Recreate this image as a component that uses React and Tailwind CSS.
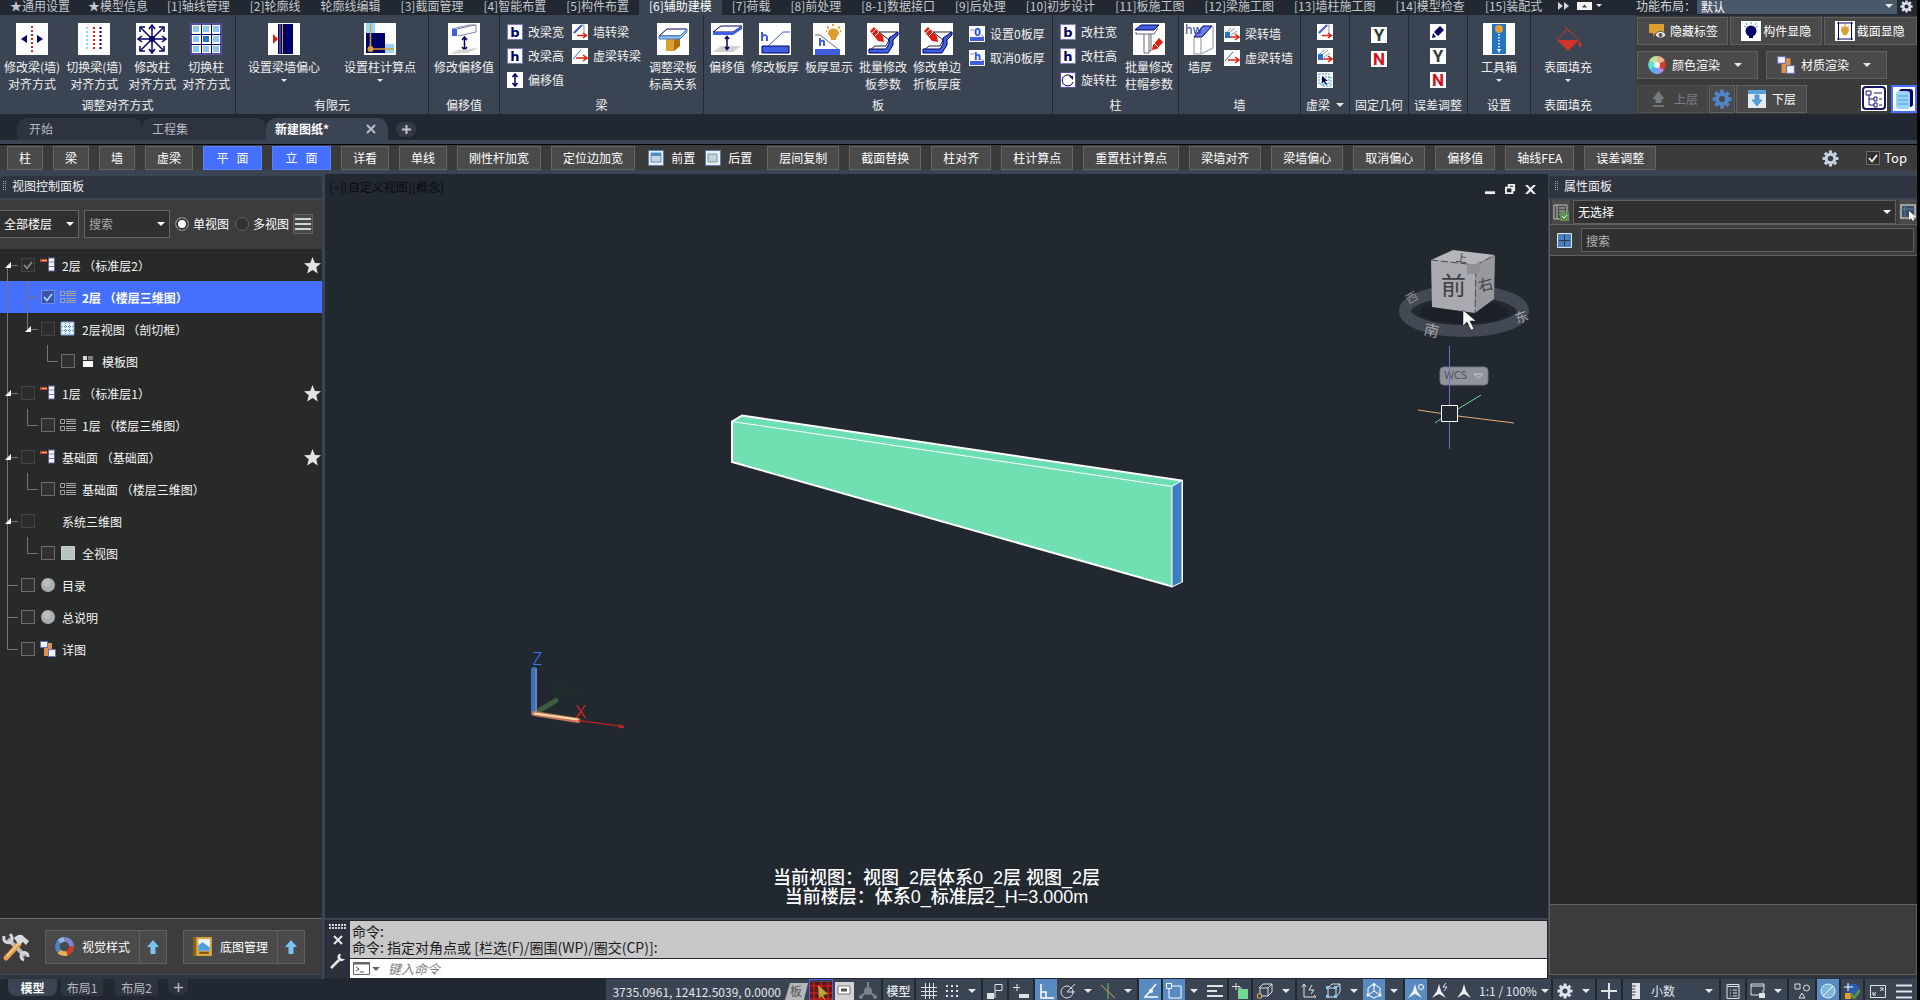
import React from 'react';

/* ---------- drawing helpers ---------- */
const Svg = ({ s = 16, w, h, vb = '0 0 16 16', className = '', children }) => (
  <svg width={w || s} height={h || s} viewBox={vb} className={'shrink-0 ' + className} fill="none" aria-hidden="true">
    {children}
  </svg>
);
const Big = ({ children, plain }) => (
  <Svg s={32} vb="0 0 32 32" className={plain ? '' : 'bg-white'}>{children}</Svg>
);
const Small = ({ children }) => <Svg className="bg-white">{children}</Svg>;
const Caret = ({ className = '', w = 8, c = '#e6e6e6' }) => (
  <Svg w={w} h={w / 2} vb="0 0 8 4" className={className}><path d="M0 0h8L4 4z" fill={c} /></Svg>
);

const NAVY = '#000066';
const BLUE = '#3f5fe0';

/* ---------- ribbon icons ---------- */
const AlignBeam = () => (
  <Big>
    <path d="M16 3v26" stroke="#e02010" strokeWidth="2" strokeDasharray="2 2" />
    <path d="M11 12v8l-6-4zM21 12v8l6-4z" fill={NAVY} />
  </Big>
);
const SwitchBeam = () => (
  <Big>
    <path d="M9 4v24" stroke="#9ad0f5" strokeWidth="2" strokeDasharray="2 2" />
    <path d="M16 4v24" stroke="#e02010" strokeWidth="2" strokeDasharray="2 2" />
    <path d="M22.500 4v24" stroke={NAVY} strokeWidth="2" strokeDasharray="2 2" />
  </Big>
);
const AlignCol = () => (
  <Big>
    <path d="M16 3v26M3 16h26M5 5l22 22M27 5L5 27" stroke={NAVY} strokeWidth="1.500" />
    <path d="M13 6l3-4 3 4M13 26l3 4 3-4M6 13l-4 3 4 3M26 13l4 3-4 3M4 9V4h5M23 4h5v5M4 23v5h5M23 28h5v-5" stroke={NAVY} strokeWidth="1.500" />
    <circle cx="16" cy="16" r="3" fill={NAVY} />
  </Big>
);
const SwitchCol = () => (
  <Big>
    <rect x="1" y="1" width="30" height="30" stroke="#5a4da8" strokeWidth="2" />
    <path d="M11.500 1v30M21.500 1v30M1 11.500h30M1 21.500h30" stroke={NAVY} />
    {[3, 13, 23].map((x) => [3, 13, 23].map((y) => (
      <rect key={x + '-' + y} x={x} y={y} width="6" height="6" fill={x === 13 && y === 13 ? '#2673c4' : '#8cc4f5'} />
    )))}
  </Big>
);
const WallOffset = () => (
  <Big>
    <path d="M10 1h15v30H10z" fill={NAVY} />
    <path d="M14.500 1v30" stroke="#dba030" />
    <path d="M12 1v30" stroke="#8d8a9c" />
    <path d="M5 11v10l5-5z" fill="#e02010" />
  </Big>
);
const CalcPoint = () => (
  <Big>
    <path d="M2 0h9v11H2zM20 21h10v9H20z" fill="#9ad4fa" />
    <path d="M2 10h19v20H2z" fill={NAVY} />
    <path d="M6.500 1v25H30" stroke="#dba030" strokeWidth="1.500" />
    <circle cx="6.500" cy="26" r="3" fill="#dba030" />
  </Big>
);
const ModifyOffset = () => (
  <Big>
    <path d="M4 6h5v7H4z" fill={BLUE} />
    <path d="M4 6l17-4h7v7l-18 4M9 6l18-4" stroke="#7882a8" />
    <path d="M16.500 14v13M14 17l2.500-3 2.500 3M14 24l2.500 3 2.500-3" stroke={NAVY} strokeWidth="1.500" />
    <path d="M2 31l8-4 20-2-10 5z" fill="#d5d5d5" />
  </Big>
);
const LetterIcon = ({ c }) => (
  <span className="flex size-4 shrink-0 items-center justify-center border border-[#8079b8] bg-white font-['DejaVu_Sans',sans-serif] text-[13px] font-bold leading-none text-[#000066]">{c}</span>
);
const PlainLetter = ({ c, red }) => (
  <span className={(red ? 'text-[#d0101a]' : 'text-[#2f3f37]') + " flex size-4 shrink-0 items-center justify-center bg-white font-['Roboto',sans-serif] text-[17px] font-bold leading-none"}>{c}</span>
);
const UpDown = () => (
  <Small><path d="M8 2v12M5.500 5L8 2l2.500 3M5.500 11L8 14l2.500-3" stroke={NAVY} strokeWidth="1.500" /></Small>
);
const WallToBeam = () => (
  <Small>
    <path d="M1 9l7-7 4-1v8" stroke="#8d93a8" /><path d="M2 9l8-8" stroke={BLUE} strokeWidth="2" />
    <path d="M5 11.500h9M11 9l3.500 2.500L11 14" stroke="#e02010" strokeWidth="1.500" />
  </Small>
);
const VirtToBeam = () => (
  <Small>
    <path d="M1 11L9 2" stroke="#2673c4" /><path d="M4 10h10M11 7l4 3-4 3" stroke="#e02010" strokeWidth="1.500" />
  </Small>
);
const BeamToWall = () => (
  <Small>
    <path d="M1 6h5v6H1z" fill="#2673c4" /><path d="M3 6l4-4M6 6l5-4M7 9l6-4" stroke="#8d93a8" />
    <path d="M6 11h8M11 8l4 3-4 3" stroke="#e02010" strokeWidth="1.500" />
  </Small>
);
const BeamSlab = () => (
  <Big>
    <path d="M9 15h14v8l-6 5H9z" fill="#dba030" /><path d="M17 17l6-2v8l-6 5z" fill="#a87012" />
    <path d="M2 13L10 6h20l-7 7z" fill="#fff" stroke={NAVY} /><path d="M2 13h21l7-7v3l-7 7H2z" fill="#8cc4f5" stroke="#5577c0" />
  </Big>
);
const SlabOffset = () => (
  <Big>
    <path d="M2 9l8-6h21l-9 6z" fill="#fff" stroke={NAVY} /><path d="M2 9h20l9-6v3l-9 6H2z" fill={BLUE} />
    <path d="M2 29l8-6h20l-8 6z" fill="#d0d0d0" />
    <path d="M16 14v12M14 16l2-2.500 2 2.500M14 24l2 2.500 2-2.500" stroke={NAVY} strokeWidth="1.500" />
  </Big>
);
const SlabThick = () => (
  <Big>
    <path d="M3 23h27v7H3z" fill={BLUE} stroke={NAVY} /><path d="M9 23L24 9h7" stroke={BLUE} />
    <path d="M3 9v9M3 14c2-3 5-2 5 0v4" stroke={BLUE} strokeWidth="2" />
  </Big>
);
const SlabShow = () => (
  <Big>
    <path d="M2 26h25v6H2z" fill={BLUE} /><path d="M2 12h5l18 14" stroke="#667" />
    <path d="M7 15v8M7 19c2-2 4-2 4 0v4" stroke={BLUE} strokeWidth="2" />
    <path d="M15 10c0-6 11-6 11 0 0 3-3 3-3 7h-5c0-4-3-4-3-7z" fill="#dba030" />
    <path d="M14 4l2 1M20 1v2M27 4l-2 1M13 8h1M28 8h-1" stroke="#dba030" strokeWidth="2" />
  </Big>
);
const SlabEdit = () => (
  <Big>
    <path d="M12 9h19l-6 5v7l-5 7H2l6-5h11l3-6z" fill="#fff" stroke="#223" />
    <path d="M2 26h17l3-5V15l9-6v3l-5 5v5l-5 8H2z" fill={BLUE} stroke={NAVY} />
    <path d="M3 8l4-4 9 9 1 6-6-1z" fill="#e02010" />
    <path d="M5 10l4-4M8 13l4-4" stroke="#fff" />
  </Big>
);
const ZeroSlab = ({ c }) => (
  <Small>
    <path d="M1 11h14v4H1z" fill={BLUE} /><path d="M1 4h4M12 9l3 2" stroke="#8d93a8" />
    <text x="5" y="10" fontSize="10" fontWeight="bold" fill="#3050d0" fontFamily="DejaVu Sans">{c}</text>
  </Small>
);
const Rotate = () => (
  <Small><rect x=".5" y=".5" width="15" height="15" stroke="#5a4da8" /><path d="M11 4a5.500 5.500 0 1 0 2 6" stroke={NAVY} /><path d="M9 4h4v4z" fill={NAVY} /></Small>
);
const ColCap = () => (
  <Big>
    <path d="M2 7l6-5h18l-5 5z" fill={BLUE} stroke={NAVY} /><path d="M3 9v2h18l4-6M11 11v19h5V11M16 28h2V11" stroke="#667" />
    <path d="M19 27l1-5 6-7 4 4-6 7z" fill="#e02010" /><path d="M21 20l4 4" stroke="#fff" />
  </Big>
);
const WallThick = () => (
  <Big>
    <path d="M10 14l9-11h9l-10 11z" fill="#6a7df0" stroke={NAVY} /><path d="M10 14v17h7l12-6V3M17 14v17" stroke="#8d93a8" />
    <text x="1" y="11" fontSize="12" fill="#3040a0" fontFamily="DejaVu Sans">hw</text>
  </Big>
);
const SelectIcon = () => (
  <Small><path d="M2 2h10v10H2zM5 5h9v9H5z" stroke="#4a9ad8" strokeDasharray="2 1" /><path d="M5 4v7l2-1 2 3 1-1-2-3h3z" fill={NAVY} /></Small>
);
const Pencil = () => (
  <Small><path d="M2 14l1-5 3 4zM4 8l6-6 4 4-6 6z" fill={NAVY} /></Small>
);
const Toolbox = () => (
  <Big>
    <path d="M9 1h14v30H9z" fill="#2673c4" /><circle cx="16" cy="6" r="4" fill="#dba030" />
    <path d="M16 11v15" stroke="#fff" strokeWidth="1.500" strokeDasharray="1.500 1.500" /><path d="M14 26h4l-2 4z" fill="#fff" />
  </Big>
);
const FillIcon = () => (
  <Big plain>
    <path d="M5 17h22L16 28z" fill="#cf3527" /><path d="M5 17L15 6l12 11M13 3l4 6" stroke="#cf3527" />
    <path d="M28 18c2 3 2 6 0 6s-2-3 0-6z" fill="#cf3527" />
  </Big>
);
const GearPath = ({ c }) => (
  <g><circle cx="8" cy="8" r="4" stroke={c} strokeWidth="3" />
    <path d="M8 .5v3M8 12.500v3M.5 8h3M12.500 8h3M2.700 2.700l2 2M11.300 11.300l2 2M13.300 2.700l-2 2M4.700 11.300l-2 2" stroke={c} strokeWidth="3" /></g>
);
const Gear = ({ s = 16, c = '#d8dfe8' }) => <Svg s={s}><GearPath c={c} /></Svg>;
const Boxes = ({ s = 16 }) => (
  <Svg s={s}><path d="M4 2h8v7h3v6H4z" fill="#dc9350" /><rect x=".5" y=".5" width="7" height="6" fill="#eef2ff" stroke="#6a6fb0" /><rect x="8.500" y="8.500" width="7" height="7" fill="#eef2ff" stroke="#6a6fb0" /></Svg>
);

/* ---------- top strip ---------- */
const TABS = ['★通用设置', '★模型信息', '[1]轴线管理', '[2]轮廓线', '轮廓线编辑', '[3]截面管理', '[4]智能布置', '[5]构件布置', '[6]辅助建模', '[7]荷载', '[8]前处理', '[8-1]数据接口', '[9]后处理', '[10]初步设计', '[11]板施工图', '[12]梁施工图', '[13]墙柱施工图', '[14]模型检查', '[15]装配式'];

const Strip = () => (
  <nav className="flex h-[15px] items-start overflow-hidden bg-[#222831] pl-px text-[#c4c8ce]">
    {TABS.map((t) => (
      <button key={t} className={(t === '[6]辅助建模' ? 'bg-[#3b4453] text-white ' : '') + (t[0] === '★' ? 'px-[9px] ' : 'px-[10px] ') + 'h-[15px] pb-1 leading-[11px] whitespace-nowrap'}>{t}</button>
    ))}
    <span className="ml-[6px] flex h-[11px] items-center gap-2">
      <Svg w={11} h={8} vb="0 0 11 8"><path d="M0 0l5 4-5 4zM6 0l5 4-5 4z" fill="#d0d3d8" /></Svg>
      <Svg w={15} h={8} vb="0 0 15 8"><path d="M0 0h15v8H0z" fill="#f2f2f2" /><path d="M5 5.500h5L7.500 2.500z" fill="#444" /></Svg>
      <Caret w={6} className="-ml-1" />
    </span>
  </nav>
);

/* ---------- ribbon ---------- */
const BigBtn = ({ icon, lines, arrow, pad = 'px-[3px]' }) => (
  <button className={pad + ' flex flex-col items-center self-start pt-2 leading-[17px] whitespace-nowrap'}>
    {icon}
    <span className="mt-[3px] flex flex-col">{lines.map((l) => <span key={l}>{l}</span>)}</span>
    {arrow && <Caret w={6} className="mt-1" />}
  </button>
);
const SmallBtn = ({ icon, label }) => (
  <button className="flex h-6 items-center gap-[5px] whitespace-nowrap" aria-label={label || 'icon'}>{icon}{label}</button>
);
const Group = ({ w, label, children, body = '' }) => (
  <section className={w + ' flex h-[99px] shrink-0 flex-col border-r border-[#222831]'}>
    <div className={body + ' flex h-20 items-start'}>{children}</div>
    <h2 className="flex h-[19px] items-center justify-center leading-[19px] whitespace-nowrap">{label}</h2>
  </section>
);
const Stack = ({ children, className = 'pt-[5px]' }) => <div className={className + ' flex flex-col items-start'}>{children}</div>;

const Ribbon = () => (
  <div className="flex h-[99px] overflow-hidden bg-[#3b4453] text-[#f0f0f0]">
    <Group w="w-[236px]" label="调整对齐方式" body="pl-px">
      <BigBtn icon={<AlignBeam />} lines={['修改梁(墙)', '对齐方式']} />
      <BigBtn icon={<SwitchBeam />} lines={['切换梁(墙)', '对齐方式']} />
      <BigBtn icon={<AlignCol />} lines={['修改柱', '对齐方式']} />
      <BigBtn icon={<SwitchCol />} lines={['切换柱', '对齐方式']} />
    </Group>
    <Group w="w-[193px]" label="有限元" body="justify-around">
      <BigBtn icon={<WallOffset />} lines={['设置梁墙偏心']} arrow />
      <BigBtn icon={<CalcPoint />} lines={['设置柱计算点']} arrow />
    </Group>
    <Group w="w-[71px]" label="偏移值" body="justify-center">
      <BigBtn icon={<ModifyOffset />} lines={['修改偏移值']} />
    </Group>
    <Group w="w-[204px]" label="梁" body="pl-[7px] gap-2">
      <Stack>
        <SmallBtn icon={<LetterIcon c="b" />} label="改梁宽" />
        <SmallBtn icon={<LetterIcon c="h" />} label="改梁高" />
        <SmallBtn icon={<UpDown />} label="偏移值" />
      </Stack>
      <Stack>
        <SmallBtn icon={<WallToBeam />} label="墙转梁" />
        <SmallBtn icon={<VirtToBeam />} label="虚梁转梁" />
      </Stack>
      <BigBtn pad="" icon={<BeamSlab />} lines={['调整梁板', '标高关系']} />
    </Group>
    <Group w="w-[349px]" label="板" body="pl-[2px]">
      <BigBtn icon={<SlabOffset />} lines={['偏移值']} />
      <BigBtn icon={<SlabThick />} lines={['修改板厚']} />
      <BigBtn icon={<SlabShow />} lines={['板厚显示']} />
      <BigBtn icon={<SlabEdit />} lines={['批量修改', '板参数']} />
      <BigBtn icon={<SlabEdit />} lines={['修改单边', '折板厚度']} />
      <Stack className="pt-[7px] pl-[5px]">
        <SmallBtn icon={<ZeroSlab c="0" />} label="设置0板厚" />
        <SmallBtn icon={<ZeroSlab c="h" />} label="取消0板厚" />
      </Stack>
    </Group>
    <Group w="w-[126px]" label="柱" body="pl-[7px] gap-[5px]">
      <Stack>
        <SmallBtn icon={<LetterIcon c="b" />} label="改柱宽" />
        <SmallBtn icon={<LetterIcon c="h" />} label="改柱高" />
        <SmallBtn icon={<Rotate />} label="旋转柱" />
      </Stack>
      <BigBtn icon={<ColCap />} lines={['批量修改', '柱帽参数']} />
    </Group>
    <Group w="w-[122px]" label="墙" body="pl-[5px] gap-2">
      <BigBtn pad="" icon={<WallThick />} lines={['墙厚']} />
      <Stack className="pt-[7px]">
        <SmallBtn icon={<BeamToWall />} label="梁转墙" />
        <SmallBtn icon={<VirtToBeam />} label="虚梁转墙" />
      </Stack>
    </Group>
    <Group w="w-[49px]" label={<><span>虚梁</span><Caret className="ml-[6px]" /></>} body="justify-center">
      <Stack><SmallBtn icon={<WallToBeam />} /><SmallBtn icon={<BeamToWall />} /><SmallBtn icon={<SelectIcon />} /></Stack>
    </Group>
    <Group w="w-[59px]" label="固定几何" body="justify-center">
      <Stack className="pt-2"><SmallBtn icon={<PlainLetter c="Y" />} /><SmallBtn icon={<PlainLetter c="N" red />} /></Stack>
    </Group>
    <Group w="w-[59px]" label="误差调整" body="justify-center">
      <Stack><SmallBtn icon={<Pencil />} /><SmallBtn icon={<PlainLetter c="Y" />} /><SmallBtn icon={<PlainLetter c="N" red />} /></Stack>
    </Group>
    <Group w="w-[63px]" label="设置" body="justify-center">
      <BigBtn icon={<Toolbox />} lines={['工具箱']} arrow />
    </Group>
    <section className="flex w-[74px] flex-col">
      <div className="flex h-20 justify-center"><BigBtn icon={<FillIcon />} lines={['表面填充']} arrow /></div>
      <h2 className="text-center leading-[19px]">表面填充</h2>
    </section>
  </div>
);

/* ---------- top right block ---------- */
const gray = 'flex items-center border border-[#606060] bg-[#4a4a4a] text-white whitespace-nowrap ';
const TopRight = () => (
  <aside className="w-[281px] shrink-0 overflow-hidden bg-[#3b3b3b]">
    <div className="flex h-[15px] items-start bg-[#222831] text-[#d4d7db]">
      <label htmlFor="layout" className="w-[61px] leading-[11px] whitespace-nowrap">功能布局：</label>
      <div className="relative flex-1">
        <select id="layout" className="block h-[14px] w-full appearance-none bg-[#4a586c] pl-1 leading-[12px] text-white"><option>默认</option></select>
        <Caret className="pointer-events-none absolute right-1 top-1" />
      </div>
      <button className="ml-[3px] mr-1" aria-label="设置"><Gear s={13} /></button>
    </div>
    <div className="flex flex-col gap-[6px] border-t border-[#2a2f38] pt-px pl-px">
      <div className="flex gap-[2px]">
        <button className={gray + 'h-7 w-[92px] gap-1 pl-[10px]'}>
          <Svg s={18} vb="0 0 18 18"><path d="M1 2h15v9H7l-2 4v-4H1z" fill="#dba030" /><path d="M7 13c3-5 8-5 11 0-3 4-8 4-11 0z" fill="#e8e8e8" stroke="#555" /><circle cx="12.500" cy="13" r="2" fill="#555" /></Svg>隐藏标签
        </button>
        <button className={gray + 'h-7 w-[92px] gap-[2px] pl-[10px]'}>
          <Svg s={20} vb="0 0 20 20" className="bg-white"><circle cx="10" cy="10" r="5.500" fill={NAVY} /><path d="M8 14h4v3H8z" fill={NAVY} /><path d="M10 1v2M3 5l2 1M17 5l-2 1M5 2l1 2M15 2l-1 2" stroke="#4a9ad8" /></Svg>构件显隐
        </button>
        <button className={gray + 'h-7 w-[94px] gap-[2px] pl-[10px]'}>
          <Svg s={20} vb="0 0 20 20" className="bg-white"><path d="M3.500 1v18M16.500 1v18M2 2h16M2 18h16" stroke={NAVY} /><path d="M6 9c0-5 8-5 8 0 0 2-2 3-2 5H8c0-2-2-3-2-5z" fill="#dba030" /><path d="M10 3v2M6 5l1 1M14 5l-1 1" stroke="#dba030" /></Svg>截面显隐
        </button>
      </div>
      <div className="flex gap-2">
        <button className={gray + 'h-7 w-[121px] pl-[10px]'}>
          <Svg s={18} vb="0 0 18 18" className="mr-[6px]">
            <path d="M9 9V0a9 9 0 0 1 8 5z" fill="#f0b090" /><path d="M9 9l8-4a9 9 0 0 1-1 9z" fill="#d83a28" /><path d="M9 9l7 5a9 9 0 0 1-7 4z" fill="#b088e8" /><path d="M9 9v9a9 9 0 0 1-7-4z" fill="#50b0f5" /><path d="M9 9l-7 5a9 9 0 0 1-1-9z" fill="#60e0d0" /><path d="M9 9L1 5a9 9 0 0 1 8-5z" fill="#b8e8a0" /><circle cx="9" cy="9" r="3" fill="#f4f4f4" />
          </Svg>颜色渲染<Caret className="ml-[14px]" />
        </button>
        <button className={gray + 'h-7 w-[121px] pl-[10px]'}><span className="mr-[6px]"><Boxes s={18} /></span>材质渲染<Caret className="ml-[14px]" /></button>
      </div>
      <div className="flex">
        <button disabled className="flex h-7 w-[71px] items-center border border-[#505050] bg-[#444] pl-3 text-[#827b88]">
          <Svg s={17} vb="0 0 17 17" className="mr-[7px]"><path d="M8.500 0l6 8h-3v4h-6V8h-3z" fill="#747c82" /><path d="M3 15h11" stroke="#69757b" strokeWidth="2" /></Svg>上层
        </button>
        <button className={gray + 'ml-px h-7 w-[26px] justify-center'} aria-label="楼层设置"><Gear s={20} c="#4e86c8" /></button>
        <button className={gray + 'ml-px h-7 w-[71px] pl-[11px]'}>
          <Svg s={18} vb="0 0 18 18" className="mr-[6px]"><path d="M0 0h18v18H0z" fill="#e4eaf0" /><path d="M0 0h18v4H0z" fill="#5aa0d8" /><path d="M7 5h4v5h3l-5 6-5-6h3z" fill="#4da3e0" stroke="#3678b0" strokeWidth=".6" /></Svg>下层
        </button>
        <button className="ml-[54px] flex size-[26px] items-center justify-center bg-white" aria-label="结构树">
          <Svg s={24} vb="0 0 24 24"><rect x="1" y="1" width="22" height="22" rx="3" stroke="#15156a" strokeWidth="2" /><path d="M4 5h5v4H4zM12 7h8M7 9v10M7 13h5M7 19h5M12 11h3v4h-3zM12 17h3v4h-3zM17 13h3M17 19h3" stroke="#15156a" /></Svg>
        </button>
        <button className="ml-1 flex h-7 w-[26px] items-center justify-center border-2 border-[#446fff] bg-white" aria-label="属性列表">
          <Svg s={22} vb="0 0 22 22"><rect x="6" y="1" width="14" height="18" rx="3" fill={NAVY} /><rect x="3" y="3" width="14" height="18" rx="3" fill="#9ad4fa" /><path d="M5 8h10M5 12h10M5 16h10" stroke="#4a9ad8" /></Svg>
        </button>
      </div>
    </div>
  </aside>
);

/* ---------- document tabs and quick bar ---------- */
const DocTabs = () => (
  <nav className="flex h-[26px] items-end bg-[#222831] pl-[17px] text-[#b4b8be]">
    <button className="h-[22px] w-[125px] rounded-t-[10px] bg-[#2d3440] pl-3 text-left">开始</button>
    <button className="h-[22px] w-[124px] rounded-t-[10px] bg-[#2d3440] pl-[10px] text-left">工程集</button>
    <div className="flex h-[22px] w-[122px] items-center justify-between rounded-t-[10px] bg-[#3b4453] pl-[9px] pr-3 text-white">
      <button className="font-bold">新建图纸*</button>
      <button aria-label="关闭"><Svg s={10} vb="0 0 10 10"><path d="M1 1l8 8M9 1L1 9" stroke="#b8bcc4" strokeWidth="2" /></Svg></button>
    </div>
    <button className="mb-[3px] ml-2 flex h-[15px] w-5 items-center justify-center rounded-lg bg-[#333a46]" aria-label="新建">
      <Svg s={9} vb="0 0 9 9"><path d="M4.500 0v9M0 4.500h9" stroke="#c0c4ca" strokeWidth="2" /></Svg>
    </button>
  </nav>
);

const Qb = ({ children, on }) => (
  <button className={(on ? 'w-[59px] border-[#5a7fff] bg-[#446fff] ' : 'border-[#666] bg-[#4a4a4a] px-[11px] ') + 'h-6 shrink-0 border text-white whitespace-pre'}>{children}</button>
);
const Layer = ({ back }) => (
  <Svg s={16} className="mr-[7px]"><path d="M.5.500h15v15H.5z" fill="#e8f0f8" stroke="#5d79a8" />{back ? <path d="M3 4h9v8H3z" fill="#c0d4d8" stroke="#7898a8" /> : <g><path d="M3 3h10v9H3z" fill="#c8d8e0" stroke="#6a8cb0" /><path d="M3 3h10v3H3z" fill="#4a90d0" /></g>}</Svg>
);
const QuickBar = () => (
  <div className="flex h-[34px] items-start gap-[10px] border-y-4 border-[#3b4453] bg-[#3b3b3b] pt-[2px] pl-[7px] pr-[10px] shadow-[inset_0_1px_0_#000]">
    <Qb>柱</Qb><Qb>梁</Qb><Qb>墙</Qb><Qb>虚梁</Qb><Qb on>{'平   面'}</Qb><Qb on>{'立   面'}</Qb><Qb>详看</Qb><Qb>单线</Qb><Qb>刚性杆加宽</Qb><Qb>定位边加宽</Qb>
    <span className="ml-[3px] mr-[5px] flex h-6 shrink-0 items-center gap-[10px] text-white">
      <button className="flex items-center"><Layer />前置</button>
      <button className="flex items-center"><Layer back />后置</button>
    </span>
    {['层间复制', '截面替换', '柱对齐', '柱计算点', '重置柱计算点', '梁墙对齐', '梁墙偏心', '取消偏心', '偏移值', '轴线FEA', '误差调整'].map((t) => <Qb key={t}>{t}</Qb>)}
    <span className="ml-auto flex h-6 items-center text-[13px] text-white">
      <button className="mr-[27px]" aria-label="工具栏设置"><Gear s={17} c="#c3cede" /></button>
      <label className="flex items-center gap-1"><Tick on />Top</label>
    </span>
  </div>
);
const Tick = ({ on, dim, blue, label }) => (
  <span className="relative flex size-[14px] shrink-0">
    <input type="checkbox" defaultChecked={on} aria-label={label} className={(blue ? 'border-[#6f8ee8] bg-[#3c55a8] ' : dim ? 'border-[#434443] bg-[#2b2c2b] ' : 'border-[#6c6c6c] bg-[#303130] ') + 'size-[14px] appearance-none border'} />
    {on && <Svg s={14} vb="0 0 14 14" className="pointer-events-none absolute inset-0"><path d="M3 7l3 3.500L11 4" stroke={blue ? '#9adcff' : dim ? '#8a8a8a' : '#fff'} strokeWidth="1.700" /></Svg>}
  </span>
);

/* ---------- left panel ---------- */
const PanelTitle = ({ children, pad = 'pl-[3px]' }) => (
  <h2 className={pad + ' flex h-[22px] shrink-0 items-center gap-[6px] rounded-t bg-[#2e3440] pb-[2px] text-[#f0f0f0]'}>
    <Svg w={3} h={10} vb="0 0 3 10"><path d="M.5 0v10M2.500 0v10" stroke="#a0a6b0" strokeDasharray="1 1" /></Svg>{children}
  </h2>
);
/* each guide letter draws one 20px gutter: | full, s start, e end, blank none; + adds the branch, v adds the arrow */
const Guide = ({ g }) => (
  <Svg w={20} h={32} vb="0 0 20 32">
    {g.includes('|') && <path d="M7.500 0v32" stroke="#747674" />}
    {g.includes('s') && <path d="M7.500 16v16" stroke="#747674" />}
    {g.includes('e') && <path d="M7.500 0v16.500" stroke="#747674" />}
    {g.includes('+') && <path d="M7.500 16.500H18" stroke="#747674" />}
    {g.includes('v') && <path d="M11 13v6H5z" fill="#fff" />}
  </Svg>
);
const Floor = () => <Svg><path d="M0 2h7v3H0z" fill="#cf4432" /><path d="M2 3.500h5" stroke="#f0b060" /><rect x="8.500" y="1" width="6" height="13" fill="#f4f4fa" stroke="#5d62a0" /><path d="M9 5h5M9 9.500h5" stroke="#80849a" /></Svg>;
const ListI = () => <Svg><path d="M.5 2.500h4v4h-4zM.5 9.500h4v4h-4zM6 2.500h10M6 4.500h10M6 6.500h10M6 9.500h10M6 11.500h10M6 13.500h10" stroke="#a4a6a4" /></Svg>;
const CutI = () => <Svg><path d="M1 1h13v13H1z" fill="#eaf2fb" /><path d="M1 1h13v13H1z" stroke="#6f9cd0" /><path d="M5.500 2v11M9.500 2v11M2 5.500h11M2 9.500h11" stroke="#4a80c0" strokeDasharray="1 1" /></Svg>;
const TmplI = () => <Svg><path d="M3 3h4v4H3z" fill="#d8d8d8" /><path d="M8 3h5v4H8z" fill="#808080" /><path d="M3 8h10v6H3z" fill="#fff" /></Svg>;
const SquareI = () => <Svg><path d="M1.500 1.500h13v13h-13z" fill="#b8c4c2" stroke="#c8ccd4" /></Svg>;
const BallI = () => <Svg><circle cx="8" cy="8" r="7" fill="#aaacae" /><circle cx="7" cy="6" r="4" fill="#bbb" /></Svg>;

const ROWS = [
  { g: ['s+v'], i: <Floor />, t: '2层 （标准层2）', star: 1, on: 1, dim: 1 },
  { g: ['|', '|+'], i: <ListI />, t: '2层 （楼层三维图）', on: 1, sel: 1 },
  { g: ['|', 'e+v'], i: <CutI />, t: '2层视图 （剖切框）', dim: 1 },
  { g: ['|', '', 'e+'], i: <TmplI />, t: '模板图' },
  { g: ['|+v'], i: <Floor />, t: '1层 （标准层1）', star: 1, dim: 1 },
  { g: ['|', 'e+'], i: <ListI />, t: '1层 （楼层三维图）' },
  { g: ['|+v'], i: <Floor />, t: '基础面 （基础面）', star: 1, dim: 1 },
  { g: ['|', 'e+'], i: <ListI />, t: '基础面 （楼层三维图）' },
  { g: ['|+v'], i: <span className="w-4" />, t: '系统三维图', dim: 1 },
  { g: ['|', 'e+'], i: <SquareI />, t: '全视图' },
  { g: ['|+'], i: <BallI />, t: '目录' },
  { g: ['|+'], i: <BallI />, t: '总说明' },
  { g: ['e+'], i: <Boxes />, t: '详图' },
];

const UpArrow = () => <Svg w={12} h={14} vb="0 0 12 14"><path d="M6 0l6 7H8.500v7h-5V7H0z" fill="#7cc4f0" /></Svg>;
const SplitBtn = ({ icon, label }) => (
  <div className="flex">
    <button className={gray + 'h-[34px] w-[95px] gap-[7px] pl-2'}>{icon}{label}</button>
    <button className={gray + '-ml-px h-[34px] w-[28px] justify-center'} aria-label={label + '更多'}><UpArrow /></button>
  </div>
);

const LeftPanel = () => (
  <aside className="flex w-[322px] shrink-0 flex-col pt-[2px]">
    <PanelTitle>视图控制面板</PanelTitle>
    <div className="mt-[2px] flex h-[49px] shrink-0 items-center bg-[#3c3c3c] pb-[2px] text-white">
      <div className="relative">
        <select aria-label="楼层" className="h-7 w-[79px] appearance-none border border-l-0 border-[#666] bg-[#303030] pl-1"><option>全部楼层</option></select>
        <Caret className="pointer-events-none absolute right-[5px] top-3" c="#fff" />
      </div>
      <div className="relative ml-[5px]">
        <select aria-label="搜索" className="h-7 w-[86px] appearance-none border border-[#666] bg-[#303030] pl-1 text-[#a8a8a8]"><option>搜索</option></select>
        <Caret className="pointer-events-none absolute right-[5px] top-3" c="#fff" />
      </div>
      <label className="ml-[5px] flex items-center gap-1 whitespace-nowrap"><input type="radio" name="view" defaultChecked className="size-[14px] appearance-none rounded-full border border-[#777] bg-[#303030] checked:bg-white checked:shadow-[inset_0_0_0_2px_#303030]" />单视图</label>
      <label className="ml-[6px] flex items-center gap-1 whitespace-nowrap"><input type="radio" name="view" className="size-[14px] appearance-none rounded-full border border-[#606060] bg-[#333]" />多视图</label>
      <button className={gray + 'ml-1 size-5 justify-center'} aria-label="菜单"><Svg><path d="M0 3h16M0 8h16M0 13h16" stroke="#fff" strokeWidth="1.500" /></Svg></button>
    </div>
    <ul className="min-h-0 flex-1 overflow-hidden bg-[#282a29] text-[#f4f4f4]">
      {ROWS.map((r) => (
        <li key={r.t} className={(r.sel ? 'bg-[#446fff] font-bold text-white ' : '') + 'flex h-8 items-center'}>
          {r.g.map((g, i) => <Guide key={i} g={g} />)}
          <label className="ml-px flex items-center whitespace-nowrap">
            <Tick on={!!r.on} dim={r.dim} blue={r.sel} />
            <span className="ml-[5px] flex">{r.i}</span>
            <span className="ml-[6px] pt-[2px]">{r.t}</span>
          </label>
          {r.star && <Svg s={17} vb="0 0 24 24" className="ml-auto mr-px"><path d="M12 0l3.300 8.300 8.700.6-6.700 5.600 2.200 8.900L12 18.500l-7.500 4.900 2.200-8.900L0 8.900l8.700-.6z" fill="#e2e4e8" /></Svg>}
        </li>
      ))}
    </ul>
    <div className="flex h-[56px] shrink-0 items-center border-t border-[#6a6a6a] bg-[#3c3c3c]">
      <button className="ml-px mr-[14px]" aria-label="工具">
        <Svg s={30} vb="0 0 30 30">
          <path d="M7 7l17 17" stroke="#b8bcc0" strokeWidth="4" />
          <path d="M3 4c-1 5 2 8 7 6 2-3 1-6-1-8M27 25c0-4-3-5-6-4-2 3-1 6 2 7" stroke="#d4d8dc" strokeWidth="3" />
          <path d="M18 12L5 26" stroke="#e8a04c" strokeWidth="5" strokeLinecap="round" /><path d="M17 12L6 24" stroke="#f8d090" strokeWidth="1.500" />
          <path d="M13 6c4-4 8-4 10-1l5 4-3 4-3-3-4 3z" fill="#d8dce0" />
        </Svg>
      </button>
      <SplitBtn label="视觉样式" icon={<Svg s={21} vb="0 0 22 22">
        <path d="M11 3.500a7.500 7.500 0 0 1 7.500 7.500" stroke="#7f86d0" strokeWidth="5" /><path d="M18.500 11a7.500 7.500 0 0 1-5 7" stroke="#d03c30" strokeWidth="5" /><path d="M13.500 18a7.500 7.500 0 0 1-8-2" stroke="#e8b050" strokeWidth="5" /><path d="M5.500 16a7.500 7.500 0 0 1 0-10" stroke="#4a84c4" strokeWidth="5" /><path d="M5.500 6A7.500 7.500 0 0 1 11 3.500" stroke="#8cb4e4" strokeWidth="5" />
      </Svg>} />
      <span className="w-4" />
      <SplitBtn label="底图管理" icon={<Svg s={21} vb="0 0 20 20"><path d="M1 1h18v18H1z" fill="#d8a83c" /><path d="M1 1h3v18H1z" fill="#8a6018" /><path d="M6 3h11v11H6z" fill="#e8f4ff" /><path d="M6 9l4-3 7 5v3H6z" fill="#4aa0e0" /><path d="M7 16h9" stroke="#7a5418" strokeWidth="2" /></Svg>} />
    </div>
    <div className="mt-px h-[4px] shrink-0 rounded-b bg-[#2e3440]" />
  </aside>
);

/* ---------- viewport ---------- */
const Viewport = () => (
  <main className="relative min-h-0 flex-1 overflow-hidden bg-[#212830]">
    <p className="absolute left-1 top-1 text-[#070b10]">[−][自定义视图][概念]</p>
    <div className="absolute right-[12px] top-[10px] flex gap-[9px]">
      {['M0 8h11v3H0z', 'M3 0h8v8h-2v3H0V3h3zM5 2v1h4v3h0V2zM2 5v4h5V5z', 'M0 1h3l3 3 3-3h3L7.500 6 12 11H9L6 8l-3 3H0l4.500-5z'].map((d, i) => (
        <button key={d} aria-label={['最小化', '还原', '关闭'][i]}><Svg s={11} vb="0 0 12 12"><path d={d} fill="#f0f0f0" fillRule="evenodd" /></Svg></button>
      ))}
    </div>
    <svg className="absolute inset-0 size-full" viewBox="325 174 1223 743" fill="none" preserveAspectRatio="xMidYMid meet">
      <path d="M732 421l10-6 440 65v101l-10 5-440-124.500z" fill="#70dfb1" stroke="#fff" strokeWidth="2" />
      <path d="M1172 486l10-6v101l-10 5z" fill="#3a7dc2" />
      <path d="M732 421l440 65v100M1172 486l10-6v101" stroke="#fff" />
      <path d="M741 419l434 64" stroke="#2ad8e8" strokeDasharray="1 3" />
      {/* axis tripod */}
      <path d="M536 712l20-12" stroke="#3e5a3f" strokeWidth="5" strokeLinecap="round" />
      <path d="M558 698l20-11m-5 1l5-1-2 4" stroke="#17381e" />
      <path d="M531 668l3-2 3 2v46h-6z" fill="#3f70b4" /><path d="M536 668v44" stroke="#80a0d0" />
      <path d="M534 713l44 7" stroke="#c87458" strokeWidth="5" strokeLinecap="round" /><path d="M534 713l44 6" stroke="#fbdcae" strokeWidth="2" />
      <path d="M578 720l46 6M619 724l5 2.500-6 1" stroke="#e02418" />
      <g fontFamily="Inter, sans-serif" fontWeight="300" fontSize="17">
        <text x="532" y="664" fill="#3e6cf5">Z</text><text x="553" y="697" fill="#17381e">Y</text><text x="575" y="717" fill="#e02418">X</text>
      </g>
    </svg>
    <svg className="absolute right-0 top-0" width="168" height="286" viewBox="1380 174 168 286" fill="none">
      <ellipse cx="1464" cy="311" rx="59" ry="20" stroke="#424953" strokeWidth="12" />
      <ellipse cx="1464" cy="312" rx="44" ry="12" fill="#1c2129" />
      <path d="M1431 260l45 5-1 48-43-6z" fill="#a8aab0" /><path d="M1431 260l22-10 42 5-19 10z" fill="#b4b6ba" /><path d="M1476 265l19-10-1 44-19 14z" fill="#98999c" />
      <path d="M1431 260l45 5-1 48M1476 265l19-10" stroke="#4b4d50" strokeDasharray="7 3" />
      <path d="M1467 264h9l4-3v10l-4 3h-9z" fill="#8e9096" />
      <g fontFamily="Noto Sans CJK SC, sans-serif" fill="#3f4146">
        <text x="1441" y="295" fontSize="25">前</text><text x="1478" y="290" fontSize="15" transform="rotate(-14 1486 285)">右</text>
        <text x="1456" y="262" fontSize="11" transform="rotate(8 1461 258)">上</text>
        <text x="1424" y="336" fontSize="15" fill="#a4a8ae" transform="rotate(14 1432 331)">南</text>
        <text x="1406" y="302" fontSize="12" fill="#8a8f96" transform="rotate(-30 1412 298)">西</text>
        <text x="1515" y="322" fontSize="13" fill="#a4a8ae" transform="rotate(-20 1521 317)">东</text>
      </g>
      <path d="M1463 310v16l4-4 4 8 3-1-4-8h6z" fill="#fff" stroke="#111" strokeWidth=".5" />
      <rect x="1440" y="367" width="48" height="18" rx="4" fill="#8f949d" stroke="#737983" />
      <text x="1444" y="379" fontSize="11" fill="#4f545c" fontFamily="Noto Sans, sans-serif">WCS</text><path d="M1474 374h9l-4.500 4z" stroke="#b8d0c8" />
      <path d="M1449.500 346v103" stroke="#7468e0" />
      <path d="M1418 410l24 3.500M1458 416l56 7" stroke="#e8ae74" /><path d="M1435 423l7-5M1458 409l23-14" stroke="#70dd90" />
      <path d="M1441.500 405.500h16v16h-16z" fill="#212830" stroke="#fff" />
    </svg>
    <div className="absolute inset-x-0 bottom-[11px] flex flex-col items-center font-['Liberation_Sans','Noto_Sans_CJK_SC',sans-serif] text-[18px] font-medium leading-[19px] text-white">
      <p className="whitespace-nowrap">当前视图：视图_2层体系0_2层 视图_2层</p>
      <p className="whitespace-nowrap">当前楼层：体系0_标准层2_H=3.000m</p>
    </div>
  </main>
);

const CommandLine = () => (
  <section className="mt-[2px] flex h-[59px] shrink-0 border border-[#222831] bg-[#2a313d]">
    <div className="flex w-6 shrink-0 flex-col items-center pt-[3px]">
      <Svg w={18} h={5} vb="0 0 18 5"><path d="M0 1h18M0 4h18" stroke="#d0d3d8" strokeWidth="2" strokeDasharray="2 1" /></Svg>
      <button className="mt-[6px]" aria-label="关闭"><Svg s={10} vb="0 0 10 10"><path d="M1 1l8 8M9 1L1 9" stroke="#e8e8e8" strokeWidth="2" /></Svg></button>
      <button className="mt-2" aria-label="自定义"><Svg s={16}><path d="M1 15l8-8" stroke="#e8e8e8" strokeWidth="2.500" /><path d="M9 1a4 4 0 1 0 6 5l-3 0-2-2 1-3z" fill="#e8e8e8" /></Svg></button>
    </div>
    <div className="min-w-0 flex-1">
      <div className="h-[37px] bg-[#c8c8c8] pt-[2px] pl-[2px] text-[14px] leading-[16px] text-[#1c1c1c]">
        <p>命令:</p>
        <p>命令: 指定对角点或 [栏选(F)/圈围(WP)/圈交(CP)]:</p>
      </div>
      <div className="flex h-[20px] items-center border-t border-[#222831] bg-white pl-[3px]">
        <Svg w={17} h={13} vb="0 0 17 13"><path d="M.5.500h16v12H.5z" stroke="#666" /><path d="M.5 1.500h16" stroke="#666" strokeWidth="2" /><path d="M3 5l3 2-3 2M7 10h4" stroke="#555" /></Svg>
        <Caret className="ml-[2px]" c="#666" />
        <input aria-label="命令" placeholder="键入命令" className="ml-[8px] h-[18px] flex-1 text-[13px] italic outline-none placeholder:text-[#7c8084]" />
      </div>
    </div>
  </section>
);

/* ---------- right panel ---------- */
const RightPanel = () => (
  <aside className="flex w-[368px] shrink-0 flex-col pt-[2px]">
    <PanelTitle pad="pl-[6px]">属性面板</PanelTitle>
    <div className="mt-[2px] flex h-[24px] shrink-0 items-center gap-[3px] border-l border-[#606060] bg-[#3c3c3c] pl-[2px]">
      <button aria-label="对象列表" className="flex h-6 w-[18px] items-center bg-[#4a4a4a] pl-px">
        <Svg s={17} vb="0 0 17 17"><path d="M1 1h13v14H1z" stroke="#c0c0c0" /><path d="M4 1v14M6 4h6M6 7h6M6 10h4" stroke="#c0c0c0" /><path d="M7 8h9v9H7z" fill="#5d9050" /><path d="M9 12l2 2 3-3" stroke="#dfe" /></Svg>
      </button>
      <div className="relative flex-1">
        <select aria-label="选择" className="block h-[24px] w-full appearance-none border border-[#606060] bg-[#303030] pl-1 text-white"><option>无选择</option></select>
        <Caret className="pointer-events-none absolute right-[5px] top-[10px]" c="#fff" />
      </div>
      <button aria-label="快速选择" className="flex h-6 w-[18px] items-center bg-[#4a4a4a] pl-px">
        <Svg s={17} vb="0 0 17 17"><path d="M1 1h14v13H1z" fill="#3a4c66" stroke="#c0c0c0" strokeWidth="1.500" /><path d="M5 1v13M1 5h14" stroke="#667a94" /><path d="M9 7v9l2-2 2 3 1-1-1-3h3z" fill="#fff" /></Svg>
      </button>
    </div>
    <div className="flex h-[32px] shrink-0 items-center gap-[9px] border border-r-0 border-[#606060] bg-[#3c3c3c] pl-[7px] pr-[3px]">
      <button aria-label="分类"><Svg s={15} vb="0 0 15 15"><path d="M.5.500h14v14H.5z" fill="#4a80bc" stroke="#dde4ec" /><path d="M7.500 2v11M2 7.500h11" stroke="#2a3a50" /></Svg></button>
      <input aria-label="搜索属性" placeholder="搜索" className="h-6 flex-1 border border-[#606060] bg-[#303030] pl-1 outline-none placeholder:text-[#b4b4b4]" />
    </div>
    <div className="min-h-0 flex-1 border-l border-[#606060] bg-[#282a29]" />
    <div className="h-[71px] shrink-0 border border-[#606060] bg-[#3c3c3c]" />
    <div className="h-[4px] shrink-0 rounded-b bg-[#2e3440]" />
  </aside>
);

/* ---------- status bar ---------- */
const L = '#dfe2e6';
const P = ({ d, c = L, sw = 1 }) => <path d={d} stroke={c} strokeWidth={sw} />;
const Cell = ({ w, on, children, className = '' }) => (
  <button className={w + ' ' + (on ? 'bg-[#5a8bc0] ' : 'bg-[#3b4453] ') + 'flex h-[21px] shrink-0 items-center justify-center pt-[3px] ' + className}>{children}</button>
);
const I = ({ children }) => <Svg>{children}</Svg>;
const Drop = () => <Cell w="w-[18px]"><Caret /></Cell>;
const Gap = () => <span className="w-[2px] shrink-0" />;
const Annot = ({ extra }) => <I><path d="M7 1l2 7 5 7-5-3-2-1-2 1-5 3 5-7z" fill="#f0f0f0" />{extra}</I>;

const Footer = () => (
  <footer className="flex h-[21px] shrink-0 overflow-hidden bg-[#222831] text-[#e4e6ea]">
    <nav className="flex items-start text-[#b4b8be]">
      <button className="ml-2 h-[17px] w-[49px] rounded-b-lg bg-[#3b4453] leading-[16px] font-bold text-white">模型</button>
      <button className="ml-1 h-[17px] w-[42px] rounded-b bg-[#2d3440] leading-[16px]">布局1</button>
      <button className="ml-3 h-[17px] w-[43px] rounded-b bg-[#2d3440] leading-[16px]">布局2</button>
      <button className="ml-[10px] flex h-4 w-[20px] items-center justify-center rounded-b-lg bg-[#2d3440]" aria-label="新建布局"><Svg s={9} vb="0 0 9 9"><P d="M4.500 0v9M0 4.500h9" sw="1.500" c="#b4b8be" /></Svg></button>
    </nav>
    <div className="ml-auto flex">
      <span className="flex h-[21px] w-[179px] items-center justify-end bg-[#3b4453] pr-1 pt-1 whitespace-nowrap">3735.0961, 12412.5039, 0.0000</span>
      <Cell w="w-[24px]"><Svg w={24} h={18} vb="0 0 24 18"><path d="M5 1h18l-4 17H0z" fill="#b4b6b8" /><text x="5" y="14" fontSize="12" fill="#555" fontFamily="Noto Sans CJK SC">板</text></Svg></Cell>
      <Cell w="w-[24px]" className="border border-b-0 border-[#5a5ae0]"><Svg w={22} h={20} vb="0 0 22 20"><path d="M0 0h22v20H0z" fill="#5c1a1c" /><P d="M4 0v20M11 0v20M18 0v20M0 4h22M0 11h22M0 17h22" c="#f01c1c" /><path d="M8 3l10 9-5 1 3 6-5-5-2 3z" fill="#b8a838" /></Svg></Cell>
      <Cell w="w-[22px]"><Svg s={19} vb="0 0 19 19"><path d="M0 0h19v19H0z" fill="#d4d4d4" /><path d="M3 4h12v8H3z" fill="#fff" stroke="#777" /><P d="M6 8h6" c="#555" sw="3" /></Svg></Cell>
      <Cell w="w-[26px]"><Svg s={20} vb="0 0 20 20"><path d="M10 1v9L2 16M10 10l8 6" stroke="#7c838c" strokeWidth="2" /><circle cx="10" cy="10" r="4" fill="#7c838c" /><circle cx="3" cy="16" r="2" fill="#7c838c" /><circle cx="17" cy="16" r="2" fill="#7c838c" /></Svg></Cell><Gap />
      <Cell w="w-[31px]" className="font-medium">模型</Cell><Gap />
      <Cell w="w-[25px]"><I><P d="M4.500 0v16M8.500 0v16M12.500 0v16M0 4.500h16M0 8.500h16M0 12.500h16" /></I></Cell>
      <Cell w="w-[22px]"><I><path d="M2 3h12M2 8h12M2 13h12" stroke={L} strokeWidth="2" strokeDasharray="2 3" /></I></Cell><Drop /><Gap />
      <Cell w="w-[24px]"><I><P d="M8 15V1.500h7v6H8" /><path d="M0 10h7v6H0z" fill={L} /></I></Cell><Gap />
      <Cell w="w-[24px]"><I><P d="M4 1v7M0 4.500h7" /><path d="M6 11h10v4H6z" fill={L} /></I></Cell><Gap />
      <Cell w="w-[22px]" on><I><P d="M3 1v14h13M3 9h5v6" c="#fff" sw="1.500" /></I></Cell>
      <Cell w="w-[22px]"><I><circle cx="7" cy="9" r="6" stroke={L} /><P d="M15 1L7 9h8" /></I></Cell><Drop />
      <Cell w="w-[22px]"><I><P d="M8 0v16" c="#60c878" /><P d="M1 2l14 13" c="#e0a060" /></I></Cell><Drop /><Gap />
      <Cell w="w-[22px]" on><I><P d="M14 1L3 14h13" c="#fff" sw="1.500" /><circle cx="9" cy="8" r="2" fill="#fff" /></I></Cell><Gap />
      <Cell w="w-[22px]" on><I><P d="M3 3h12v12H3z" c="#fff" /><path d="M.5.500h5v5h-5z" fill="#5a8bc0" stroke="#fff" /></I></Cell><Drop />
      <Cell w="w-[24px]"><I><P d="M0 3h16M0 8h10M0 13h16" sw="2" /></I></Cell><Gap />
      <Cell w="w-[22px]"><I><P d="M4 0v7M0 3.500h8M6 5h4" /><path d="M6 6h10v10H6z" fill="#70d890" /></I></Cell><Gap />
      <Cell w="w-[24px]"><I><P d="M2 5l4-4h9v8l-4 4H3V5h8v8M11 5l4-4" /><path d="M.5 11h4v4h-4z" fill="#3b4453" stroke="#e0a060" /></I></Cell><Drop /><Gap />
      <Cell w="w-[24px]"><I><P d="M3 14V2M1 4l2-3 2 3M3 14h12l-2-2M11 2l-3 5h5l-3 4" /></I></Cell>
      <Cell w="w-[24px]"><I><P d="M3 5l4-4h8v8l-4 5H3zh8v9M11 5l4-4" /><path d="M1 3h3v3H1zM9 3h3v3H9zM1 12h3v3H1zM9 12h3v3H9z" fill="#80c8f5" /></I></Cell><Drop />
      <Cell w="w-[22px]" on><I><P d="M8 1l6 4v7l-6 3-6-3V5zM8 1v7M2 12l6-4 6 4" c="#fff" /><circle cx="8" cy="1.500" r="1.500" fill="#fff" /><circle cx="2" cy="12" r="1.500" fill="#fff" /><circle cx="14" cy="12" r="1.500" fill="#fff" /></I></Cell><Drop /><Gap />
      <Cell w="w-[22px]" on><Annot extra={<circle cx="13" cy="4" r="2.500" stroke="#fff" />} /></Cell>
      <Cell w="w-[26px]"><Annot extra={<P d="M14 0l-3 4h4l-3 4" />} /></Cell>
      <Cell w="w-[24px]"><Annot /></Cell>
      <Cell w="w-[74px]" className="gap-1 whitespace-nowrap">1:1 / 100%<Caret /></Cell><Gap />
      <Cell w="w-[24px]"><Gear c="#dfe2e6" /></Cell><Drop /><Gap />
      <Cell w="w-[24px]"><I><P d="M8 0v16M0 8h16" sw="2" /></I></Cell><Gap />
      <Cell w="w-[96px]" className="pl-1"><I><path d="M5 0h8v16H5z" fill={L} /><P d="M5 3h4M5 6h3M5 9h4M5 12h3" c="#3b4453" /></I><span className="ml-2">小数</span><Caret className="ml-auto mr-[6px]" /></Cell><Gap />
      <Cell w="w-[24px]"><I><P d="M2 1.500h12v14H2zM2 3.500h12M5 7h1M8 7h4M5 10h1M8 10h4M5 13h1M8 13h4" /></I></Cell><Gap />
      <Cell w="w-[22px]"><I><P d="M10 12H1V1h13v5M1 3h13" /><path d="M9 10h6v5H9z" fill={L} /><P d="M13 10V7h2" /></I></Cell><Drop /><Gap />
      <Cell w="w-[26px]"><I><P d="M1 1h5v5H1zM5 15l3-5 3 5z" /><circle cx="12.500" cy="5" r="3" stroke={L} /></I></Cell><Gap />
      <Cell w="w-[22px]" on><I><circle cx="8" cy="8" r="7" fill="#80b8d8" stroke="#e0f4ff" /><P d="M3 13L13 3" c="#fff" /></I></Cell><Gap />
      <Cell w="w-[22px]"><I><path d="M3 1h9l3 3v8H3z" fill="#2c5ca8" /><P d="M0 4h9M4 0v8" c="#fff" /><path d="M1 10h6v6H1z" fill="#e0a030" /><P d="M7 11l3 4 6-8" c="#5c9848" sw="2.500" /></I></Cell><Gap />
      <Cell w="w-[26px]"><I><P d="M.5 2.500h15v12H.5zM10 5h3v3M13 5l-3 3M3 9v3h3M3 12l3-3" /></I></Cell>
      <Cell w="w-[26px]"><I><P d="M0 2.500h16M0 8.500h16M0 14.500h16" sw="2" /></I></Cell>
    </div>
  </footer>
);

export default function App() {
  return (
    <div className="flex h-screen flex-col overflow-hidden border-r-[3px] border-black bg-[#3b4453] font-['Noto_Sans_CJK_SC',sans-serif] text-[12px] leading-[18px]">
      <header className="shrink-0">
        <div className="flex">
          <div className="min-w-0 flex-1"><Strip /><Ribbon /></div>
          <TopRight />
        </div>
        <DocTabs />
        <QuickBar />
      </header>
      <div className="flex min-h-0 flex-1">
        <LeftPanel />
        <div className="ml-[3px] mr-[1px] flex min-w-0 flex-1 flex-col"><Viewport /><CommandLine /></div>
        <RightPanel />
      </div>
      <Footer />
    </div>
  );
}
